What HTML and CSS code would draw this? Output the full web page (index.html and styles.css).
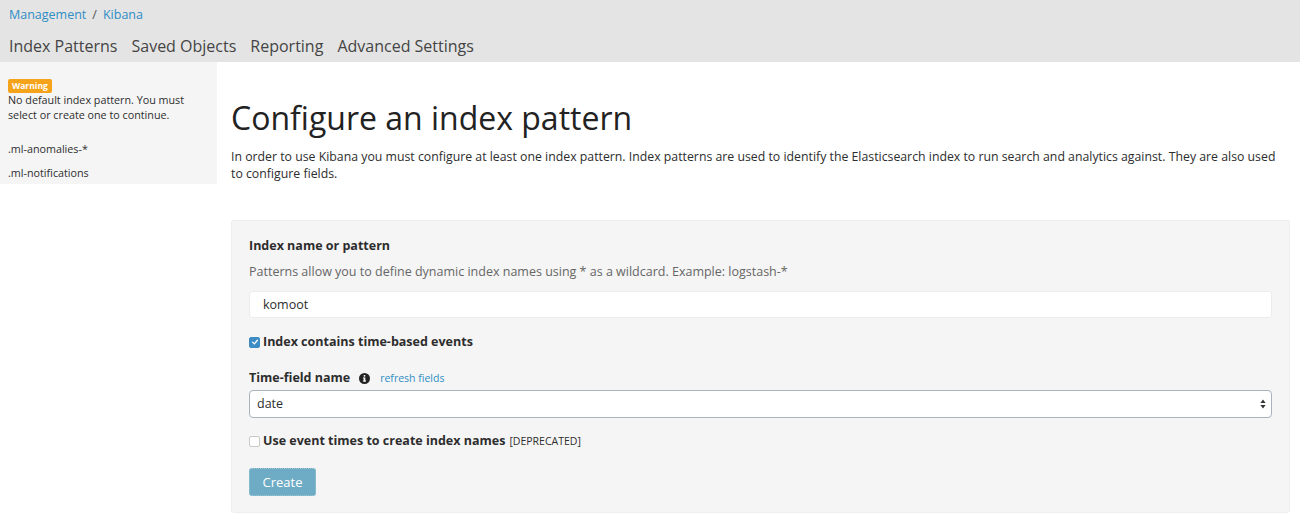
FILE: index.html
```html
<!DOCTYPE html>
<html>
<head>
<meta charset="utf-8">
<link rel="stylesheet" href="styles.css">
</head>
<body>
<header class="topbar">
  <div class="crumbs"><a class="crumb">Management</a><span class="sep">/</span><a class="crumb">Kibana</a></div>
  <nav class="tabs">
    <span class="tab">Index Patterns</span>
    <span class="tab">Saved Objects</span>
    <span class="tab">Reporting</span>
    <span class="tab">Advanced Settings</span>
  </nav>
</header>
<div class="layout">
  <aside class="sidebar">
    <span class="badge">Warning</span>
    <p class="warn-text">No default index pattern. You must select or create one to continue.</p>
    <ul class="patterns">
      <li>.ml-anomalies-*</li>
      <li>.ml-notifications</li>
    </ul>
  </aside>
  <main class="main">
    <h1 class="title">Configure an index pattern</h1>
    <p class="intro">In order to use Kibana you must configure at least one index pattern. Index patterns are used to identify the Elasticsearch index to run search and analytics against. They are also used to configure fields.</p>
    <section class="panel">
      <div class="label">Index name or pattern</div>
      <div class="help">Patterns allow you to define dynamic index names using * as a wildcard. Example: logstash-*</div>
      <div class="input">komoot</div>
      <label class="check first"><span class="box checked"><svg viewBox="0 0 10 10" width="8" height="8"><path d="M2 5.2 L4.2 7.3 L8 2.8" fill="none" stroke="#fff" stroke-width="1.6" stroke-linecap="round" stroke-linejoin="round"/></svg></span>Index contains time-based events</label>
      <div class="label time-label">Time-field name <span class="info"><svg viewBox="0 0 12 12" width="11" height="11"><circle cx="6" cy="6" r="6" fill="#222"/><rect x="5.1" y="5" width="1.8" height="4.2" fill="#fff"/><rect x="4.3" y="8.2" width="3.4" height="1.1" fill="#fff"/><rect x="4.3" y="5" width="1.8" height="1" fill="#fff"/><circle cx="6" cy="3.1" r="1.05" fill="#fff"/></svg></span><a class="refresh">refresh fields</a></div>
      <div class="select">date<span class="arrows"><svg viewBox="0 0 6 10" width="6" height="10"><path d="M3 0.5 L5.6 4 L0.4 4 Z M3 9.5 L5.6 6 L0.4 6 Z" fill="#333"/></svg></span></div>
      <label class="check second"><span class="box"></span>Use event times to create index names <span class="dep">[DEPRECATED]</span></label>
      <button class="btn">Create</button>
    </section>
  </main>
</div>
</body>
</html>
```
FILE: styles.css
```css
* { box-sizing: border-box; }
html, body { margin: 0; padding: 0; background: #fff; }
body { font-family: "Open Sans", "Liberation Sans", sans-serif; color: #2d2d2d; width: 1300px; height: 528px; overflow: hidden; }

.topbar { background: #e4e4e4; height: 62px; padding: 6px 9px 0; }
.crumbs { font-size: 12.5px; line-height: 18px; }
.crumb { color: #2f8dc4; }
.sep { color: #555; margin: 0 6px; }
.tabs { display: flex; gap: 14px; margin-top: 10px; font-size: 16px; line-height: 24px; color: #444; }

.layout { display: flex; align-items: flex-start; }
.sidebar { width: 217px; background: #f5f5f5; padding: 16px 8px 0; height: 122px; font-size: 10.75px; color: #2d2d2d; }
.badge { display: inline-block; background: #f5a31a; color: #fff; font-weight: 700; font-size: 8.5px; line-height: 14px; padding: 0 4px; border-radius: 2px; }
.warn-text { margin: 0; line-height: 15px; }
.patterns { list-style: none; margin: 19px 0 0; padding: 0; }
.patterns li { line-height: 15px; margin-bottom: 9px; }

.main { flex: 1; padding: 0 10px 0 14px; }
.title { font-weight: 400; font-size: 32px; line-height: 40px; margin: 36px 0 0; color: #222; }
.intro { font-size: 12.3px; line-height: 17px; margin: 10px 0 0; color: #2d2d2d; }

.panel { margin-top: 38px; background: #f5f5f5; border: 1px dotted #e8e8e8; border-radius: 3px; padding: 16px 17px 17px; height: 293px; }
.label { font-size: 12.5px; font-weight: 700; line-height: 18px; color: #2d2d2d; }
.help { font-size: 12.5px; color: #666; line-height: 18px; margin-top: 8px; }
.input { margin-top: 10px; height: 27px; background: #fff; border: 1px solid #ececec; border-radius: 3px; font-size: 12.5px; line-height: 25px; padding: 0 13px; color: #2d2d2d; }
.check { display: flex; align-items: center; gap: 3px; font-size: 12.5px; font-weight: 700; line-height: 18px; }
.check.first { margin-top: 15px; }
.check.second { margin-top: 14px; }
.box { width: 11px; height: 11px; border: 1px solid #c8c8c8; border-radius: 2px; background: #fff; display: inline-flex; align-items: center; justify-content: center; }
.box.checked { background: #3d8dc4; border-color: #3d8dc4; }
.dep { font-weight: 400; font-size: 10.5px; margin-left: 1px; }
.time-label { display: flex; align-items: center; margin-top: 18px; }
.info { display: inline-flex; margin-left: 9px; }
.refresh { font-weight: 400; font-size: 10.5px; color: #2f8dc4; margin-left: 10px; }
.select { margin-top: 3px; height: 28px; background: #fff; border: 1px solid #a9b3c0; border-radius: 4px; font-size: 12.5px; line-height: 26px; padding: 0 7px; display: flex; justify-content: space-between; align-items: center; }
.arrows { display: inline-flex; margin-right: -2px; }
.btn { display: block; margin-top: 18px; width: 67px; height: 28px; background: #6eacc5; border: 1px dotted #9cc8d9; border-radius: 3px; color: #fff; font-family: "Open Sans", sans-serif; font-size: 13px; padding: 0; }
```
